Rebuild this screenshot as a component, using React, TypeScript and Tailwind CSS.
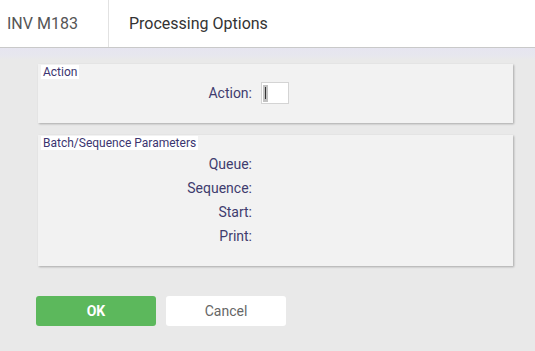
import React from "react";

const font = { fontFamily: "Roboto, 'Noto Sans', sans-serif" };

function Legend({ children }: { children: React.ReactNode }) {
  return (
    <div className="flex">
      <span className="ml-[3px] mt-[1px] bg-white px-[2px] text-[12px] leading-[14px] text-[#3b3570]">
        {children}
      </span>
    </div>
  );
}

function Row({ label, children }: { label: string; children?: React.ReactNode }) {
  return (
    <div className="flex h-[24px] items-center">
      <div className="w-[214px] text-right text-[14px] text-[#3f3c6e]">{label}</div>
      <div className="ml-[9px] flex items-center">{children}</div>
    </div>
  );
}

export default function App() {
  return (
    <div className="flex h-[351px] w-[535px] flex-col bg-white" style={font}>
      <header className="flex h-[48px] shrink-0 border-b border-[#c9c9c9] bg-white">
        <div className="flex w-[109px] items-center border-r border-[#e2e2e2] pl-[7px] text-[16px] text-[#555555]">
          INV M183
        </div>
        <div className="flex items-center pl-[20px] text-[16px] text-[#333333]">Processing Options</div>
      </header>
      <main className="flex flex-1 flex-col bg-[linear-gradient(to_bottom,#e6e5f0_0px,#e7e7ee_8px,#e9e9e9_12px)] pl-[38px] pt-[16px]">
        <section className="h-[59px] w-[475px] bg-[#f2f2f2] shadow-[1px_1px_2px_rgba(0,0,0,0.28)]">
          <Legend>Action</Legend>
          <div className="mt-[3px]">
            <div className="flex h-[22px] items-center">
              <div className="w-[214px] text-right text-[14px] text-[#3f3c6e]">Action:</div>
              <div className="ml-[9px] flex h-[22px] w-[28px] items-center border border-[#d4d4d4] bg-white pl-[1px]">
                <div className="flex h-[17px] w-[5px] items-center justify-center bg-[#c2c2c2]">
                  <div className="h-[12px] w-[1px] bg-[#333]" />
                </div>
              </div>
            </div>
          </div>
        </section>
        <section className="mt-[12px] h-[131px] w-[475px] bg-[#f2f2f2] shadow-[1px_1px_2px_rgba(0,0,0,0.28)]">
          <Legend>Batch/Sequence Parameters</Legend>
          <div className="mt-[2px]">
            <Row label="Queue:" />
            <Row label="Sequence:" />
            <Row label="Start:" />
            <Row label="Print:" />
          </div>
        </section>
        <div className="-ml-[2px] mt-[30px] flex gap-[10px]">
          <button className="h-[30px] w-[120px] rounded-[3px] bg-[#5cb85c] text-[14px] font-bold text-white">
            OK
          </button>
          <button className="h-[30px] w-[120px] rounded-[3px] bg-white text-[14px] text-[#666666]">
            Cancel
          </button>
        </div>
      </main>
    </div>
  );
}
